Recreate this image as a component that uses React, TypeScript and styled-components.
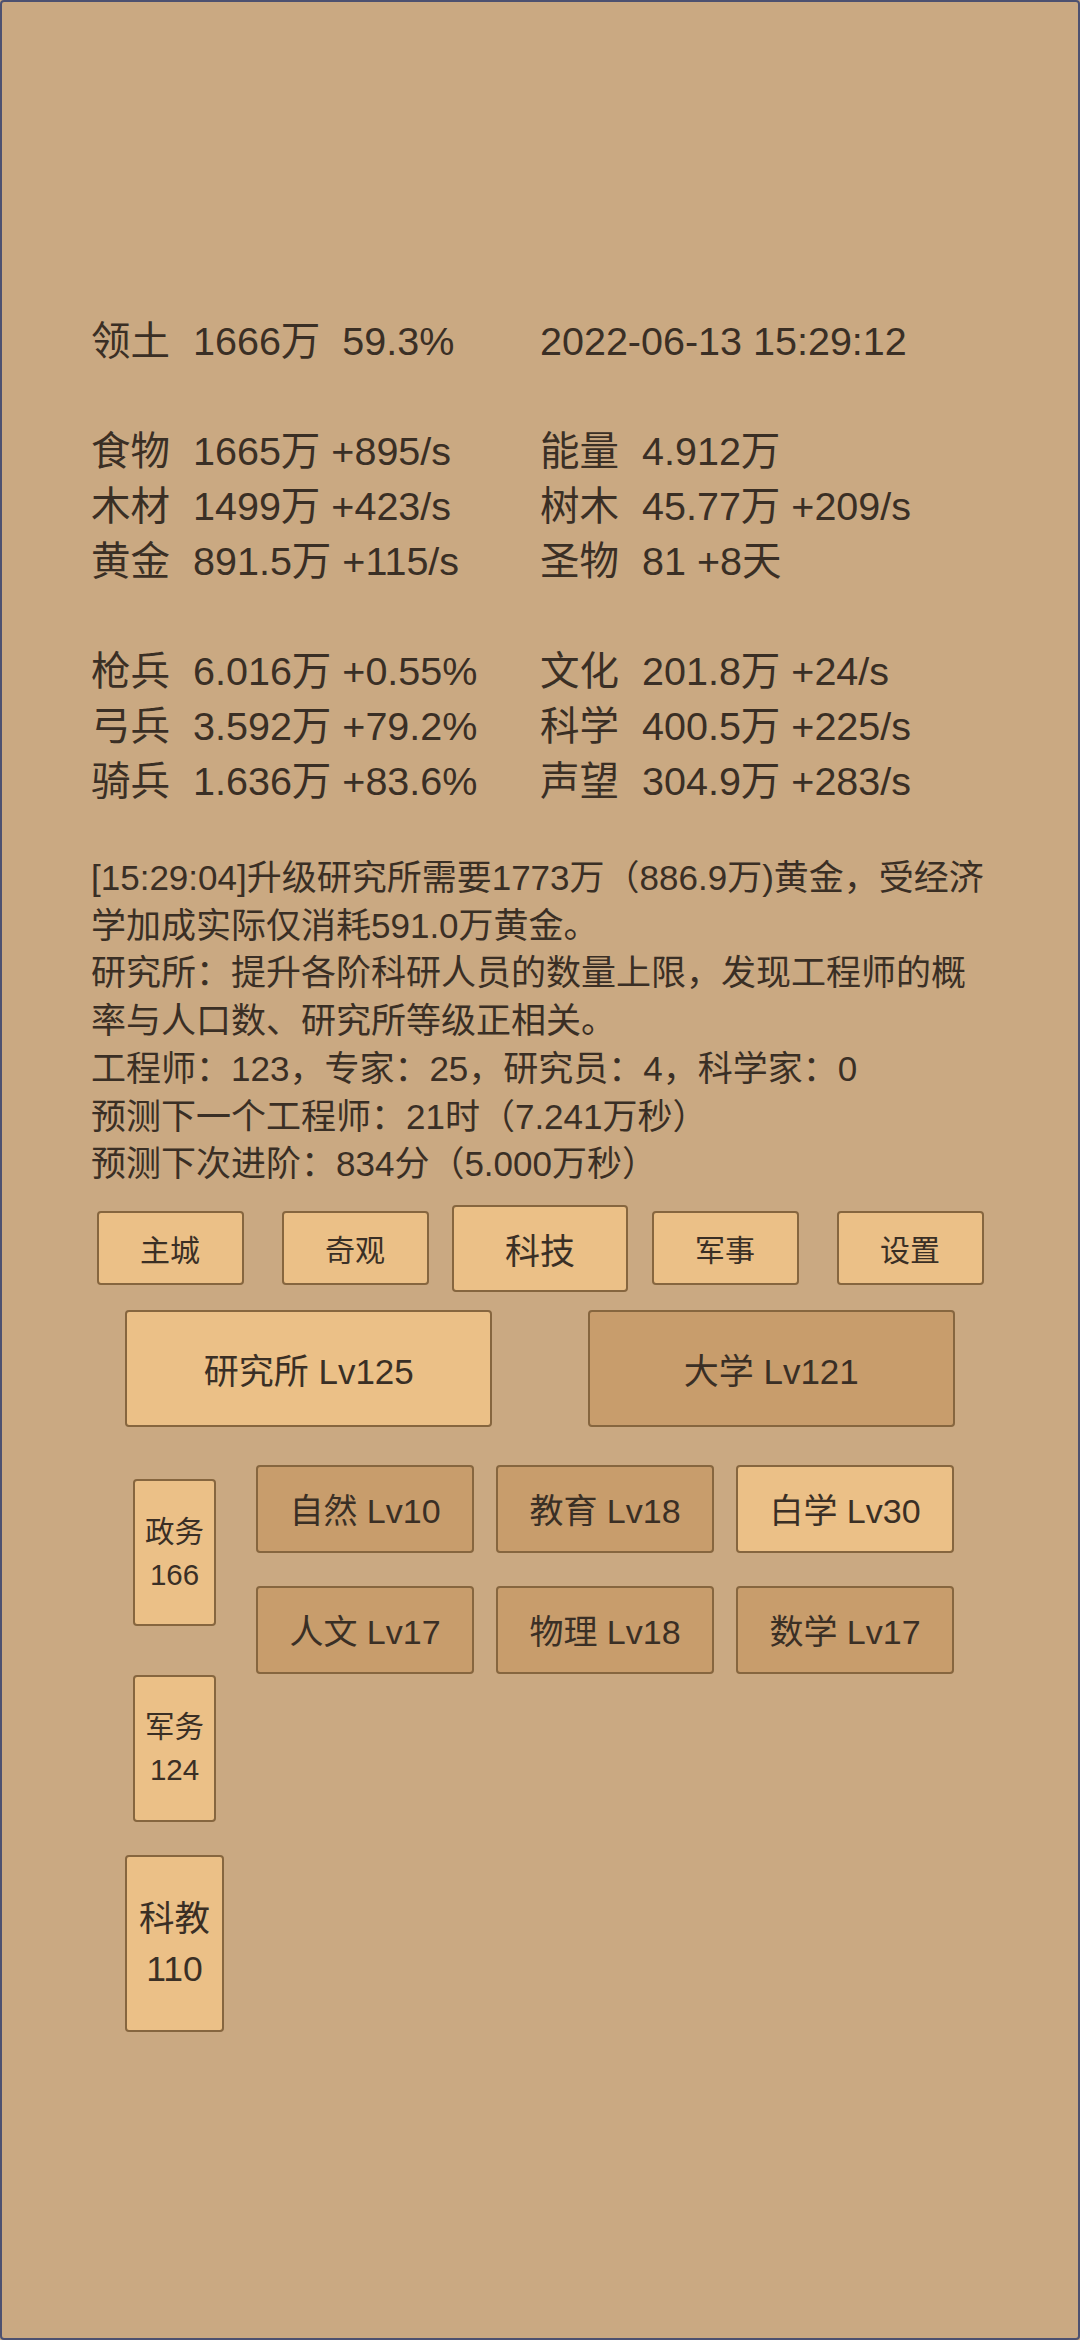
import styled, { createGlobalStyle } from "styled-components";

const GlobalStyle = createGlobalStyle`
  html, body {
    margin: 0;
    padding: 0;
    background: #caa982;
  }
  body {
    font-family: "Liberation Sans", "Noto Sans CJK SC", sans-serif;
    color: #3a2f25;
  }
`;

type Stat = { label: string; value: string } | null;

const statRows: [Stat, Stat][] = [
  [
    { label: "领土", value: "1666万  59.3%" },
    { label: "", value: "2022-06-13 15:29:12" },
  ],
  [null, null],
  [
    { label: "食物", value: "1665万 +895/s" },
    { label: "能量", value: "4.912万" },
  ],
  [
    { label: "木材", value: "1499万 +423/s" },
    { label: "树木", value: "45.77万 +209/s" },
  ],
  [
    { label: "黄金", value: "891.5万 +115/s" },
    { label: "圣物", value: "81 +8天" },
  ],
  [null, null],
  [
    { label: "枪兵", value: "6.016万 +0.55%" },
    { label: "文化", value: "201.8万 +24/s" },
  ],
  [
    { label: "弓兵", value: "3.592万 +79.2%" },
    { label: "科学", value: "400.5万 +225/s" },
  ],
  [
    { label: "骑兵", value: "1.636万 +83.6%" },
    { label: "声望", value: "304.9万 +283/s" },
  ],
];

const logLines = [
  "[15:29:04]升级研究所需要1773万（886.9万)黄金，受经济学加成实际仅消耗591.0万黄金。",
  "研究所：提升各阶科研人员的数量上限，发现工程师的概率与人口数、研究所等级正相关。",
  "工程师：123，专家：25，研究员：4，科学家：0",
  "预测下一个工程师：21时（7.241万秒）",
  "预测下次进阶：834分（5.000万秒）",
];

const tabs = ["主城", "奇观", "科技", "军事", "设置"];
const activeTab = "科技";

const buildings = [
  { name: "研究所 Lv125", lit: true },
  { name: "大学 Lv121", lit: false },
];

const sideItems = [
  { name: "政务", count: 166, active: false },
  { name: "军务", count: 124, active: false },
  { name: "科教", count: 110, active: true },
];

const sciences = [
  { name: "自然 Lv10", lit: false },
  { name: "教育 Lv18", lit: false },
  { name: "白学 Lv30", lit: true },
  { name: "人文 Lv17", lit: false },
  { name: "物理 Lv18", lit: false },
  { name: "数学 Lv17", lit: false },
];

export default function App() {
  return (
    <>
      <GlobalStyle />
      <Frame>
        <Content>
          <StatGrid>
            {statRows.map((row, i) =>
              row.map((cell, j) =>
                cell ? (
                  <StatCell key={`${i}-${j}`}>
                    {cell.label && <StatLabel>{cell.label}</StatLabel>}
                    {cell.value}
                  </StatCell>
                ) : (
                  <StatCell key={`${i}-${j}`} />
                )
              )
            )}
          </StatGrid>

          <Log>
            {logLines.map((line) => (
              <p key={line}>{line}</p>
            ))}
          </Log>

          <TabRow>
            {tabs.map((t) => (
              <TabCell key={t}>
                <TabButton $active={t === activeTab}>{t}</TabButton>
              </TabCell>
            ))}
          </TabRow>

          <BuildingRow>
            {buildings.map((b) => (
              <BuildingCell key={b.name}>
                <BuildingButton $lit={b.lit}>{b.name}</BuildingButton>
              </BuildingCell>
            ))}
          </BuildingRow>

          <Lower>
            <SideColumn>
              {sideItems.map((s) => (
                <SideCell key={s.name}>
                  <SideBox $active={s.active}>
                    <span>{s.name}</span>
                    <span>{s.count}</span>
                  </SideBox>
                </SideCell>
              ))}
            </SideColumn>
            <ScienceGrid>
              {sciences.map((s) => (
                <ScienceButton key={s.name} $lit={s.lit}>
                  {s.name}
                </ScienceButton>
              ))}
            </ScienceGrid>
          </Lower>
        </Content>
      </Frame>
    </>
  );
}

const Frame = styled.div`
  width: 1080px;
  height: 2340px;
  box-sizing: border-box;
  border: 2px solid #4d5170;
  border-radius: 4px;
  background: #caa982;
  overflow: hidden;
`;

const Content = styled.div`
  width: 925px;
  margin: 0 auto;
  padding-top: 312px;
`;

const StatGrid = styled.div`
  display: grid;
  grid-template-columns: 449px 1fr;
  grid-auto-rows: 55px;
  padding: 0 13.5px;
  font-size: 39.5px;
  line-height: 55px;
  white-space: pre;
`;

const StatCell = styled.div`
  display: flex;
  align-items: center;
`;

const StatLabel = styled.span`
  margin-right: 23px;
`;

const Log = styled.div`
  margin-top: 45px;
  padding: 0 13.5px;
  font-size: 35px;
  line-height: 47.7px;

  p {
    margin: 0;
  }
`;

const TabRow = styled.div`
  display: grid;
  grid-template-columns: repeat(5, 1fr);
  align-items: center;
  height: 87px;
  margin-top: 17px;
`;

const TabCell = styled.div`
  display: flex;
  justify-content: center;
`;

const buttonBase = `
  display: flex;
  align-items: center;
  justify-content: center;
  box-sizing: border-box;
  border: 2px solid #86663f;
  border-radius: 4px;
  color: #3a2f25;
  white-space: nowrap;
`;

const TabButton = styled.div<{ $active?: boolean }>`
  ${buttonBase}
  background: #ebc087;
  width: ${(p) => (p.$active ? 176 : 147)}px;
  height: ${(p) => (p.$active ? 87 : 74)}px;
  font-size: ${(p) => (p.$active ? 35 : 30)}px;
`;

const BuildingRow = styled.div`
  display: grid;
  grid-template-columns: 1fr 1fr;
  margin-top: 18px;
`;

const BuildingCell = styled.div`
  display: flex;
  justify-content: center;
`;

const BuildingButton = styled.div<{ $lit?: boolean }>`
  ${buttonBase}
  width: 367px;
  height: 117px;
  font-size: 35px;
  background: ${(p) => (p.$lit ? "#ebc087" : "#c89d6c")};
`;

const Lower = styled.div`
  display: flex;
  align-items: flex-start;
  margin-top: 28px;
`;

const SideColumn = styled.div`
  display: flex;
  flex-direction: column;
  width: 99px;
  margin-left: 47.5px;
`;

const SideCell = styled.div`
  display: flex;
  align-items: center;
  justify-content: center;
  height: 195.5px;
`;

const SideBox = styled.div<{ $active?: boolean }>`
  ${buttonBase}
  flex-direction: column;
  background: #ebc087;
  width: ${(p) => (p.$active ? 99 : 83)}px;
  height: ${(p) => (p.$active ? 177 : 147)}px;
  font-size: ${(p) => (p.$active ? 35.5 : 29.5)}px;
  line-height: ${(p) => (p.$active ? 50 : 43)}px;
`;

const ScienceGrid = styled.div`
  display: grid;
  grid-template-columns: repeat(3, 218px);
  grid-auto-rows: 88px;
  column-gap: 22px;
  row-gap: 33px;
  margin-left: 32px;
  margin-top: 10px;
`;

const ScienceButton = styled.div<{ $lit?: boolean }>`
  ${buttonBase}
  font-size: 34px;
  background: ${(p) => (p.$lit ? "#ebc087" : "#c89d6c")};
`;
